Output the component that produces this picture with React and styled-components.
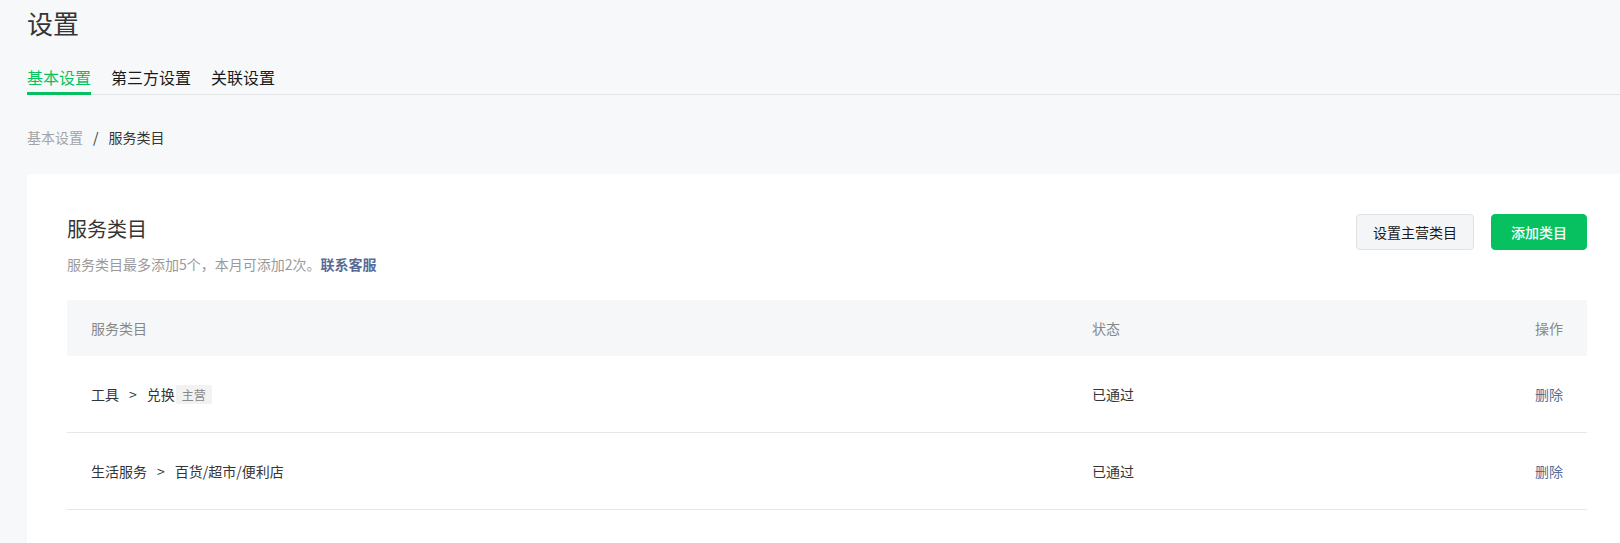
import React from "react";
import styled, { createGlobalStyle } from "styled-components";

const GlobalStyle = createGlobalStyle`
  html, body {
    margin: 0;
    padding: 0;
    overflow: hidden;
    background: #f7f8fa;
  }
  body {
    font-family: "Noto Sans CJK SC", "Noto Sans", sans-serif;
    color: #353535;
  }
`;

const Page = styled.div`
  display: flex;
  flex-direction: column;
  height: 100vh;
  box-sizing: border-box;
  padding: 5px 0 0 27px;
`;

const PageTitle = styled.h1`
  margin: 0;
  font-size: 26px;
  font-weight: normal;
  line-height: 36px;
  color: #353535;
`;

const TabBar = styled.div`
  display: flex;
  gap: 20px;
  margin-top: 24px;
  border-bottom: 1px solid #e3e4e6;
`;

const Tab = styled.div`
  font-size: 16px;
  line-height: 24px;
  padding-bottom: 3px;
  margin-bottom: -1px;
  border-bottom: 3px solid ${(p) => (p.$active ? "#07c160" : "transparent")};
  color: ${(p) => (p.$active ? "#07c160" : "#1a1a1a")};
`;

const Breadcrumb = styled.div`
  display: flex;
  align-items: center;
  margin-top: 32px;
  font-size: 14px;
  line-height: 20px;
`;

const Crumb = styled.span`
  color: ${(p) => (p.$current ? "#353535" : "#a3a3a3")};
`;

const Slash = styled.span`
  margin: 0 10px;
  color: #353535;
`;

const Card = styled.div`
  flex: 1;
  margin-top: 27px;
  background: #fff;
  border-radius: 4px 0 0 0;
  padding: 41px 33px 0 40px;
  overflow: hidden;
`;

const CardHead = styled.div`
  display: flex;
  justify-content: space-between;
  align-items: flex-start;
`;

const CardTitle = styled.h2`
  margin: 0;
  font-size: 20px;
  font-weight: normal;
  line-height: 28px;
  color: #353535;
`;

const CardDesc = styled.p`
  margin: 11px 0 0;
  font-size: 14px;
  line-height: 20px;
  color: #9a9a9a;
`;

const Link = styled.a`
  color: #576b95;
  text-decoration: none;
  font-weight: ${(p) => (p.$bold ? 600 : "normal")};
  cursor: pointer;
`;

const Actions = styled.div`
  display: flex;
  gap: 17px;
  margin-top: -1px;
`;

const Button = styled.button`
  height: 36px;
  min-width: 96px;
  box-sizing: border-box;
  padding: 0 16px;
  border-radius: 4px;
  font-family: inherit;
  font-size: 14px;
  cursor: pointer;
  border: 1px solid ${(p) => (p.$primary ? "#07c160" : "#e0e1e4")};
  background: ${(p) => (p.$primary ? "#07c160" : "#f4f5f7")};
  color: ${(p) => (p.$primary ? "#fff" : "#1a1a1a")};
  font-weight: ${(p) => (p.$primary ? 500 : "normal")};
`;

const Table = styled.div`
  margin-top: 26px;
`;

const Row = styled.div`
  display: grid;
  grid-template-columns: 1001px 1fr 180px;
  align-items: center;
  height: ${(p) => (p.$head ? "56px" : "77px")};
  box-sizing: border-box;
  background: ${(p) => (p.$head ? "#f6f7f9" : "#fff")};
  border-bottom: ${(p) => (p.$head ? "none" : "1px solid #e7e7e7")};
  font-size: 14px;
  line-height: 20px;
  color: ${(p) => (p.$head ? "#888" : "#353535")};
`;

const Cell = styled.div`
  padding: 0 24px;
  display: flex;
  align-items: center;
  justify-content: ${(p) => (p.$right ? "flex-end" : "flex-start")};
`;

const Arrow = styled.span`
  margin: 0 10px;
`;

const Tag = styled.span`
  display: inline-block;
  height: 19px;
  line-height: 19px;
  padding: 0 6px;
  margin-left: 1px;
  background: #f2f2f2;
  border-radius: 2px;
  font-size: 12px;
  color: #888;
`;

const rows = [
  { path: ["工具", "兑换"], main: true, status: "已通过" },
  { path: ["生活服务", "百货/超市/便利店"], main: false, status: "已通过" },
];

export default function App() {
  return (
    <>
      <GlobalStyle />
      <Page>
        <PageTitle>设置</PageTitle>
        <TabBar>
          <Tab $active>基本设置</Tab>
          <Tab>第三方设置</Tab>
          <Tab>关联设置</Tab>
        </TabBar>
        <Breadcrumb>
          <Crumb>基本设置</Crumb>
          <Slash>/</Slash>
          <Crumb $current>服务类目</Crumb>
        </Breadcrumb>
        <Card>
          <CardHead>
            <div>
              <CardTitle>服务类目</CardTitle>
              <CardDesc>
                服务类目最多添加5个，本月可添加2次。
                <Link $bold>联系客服</Link>
              </CardDesc>
            </div>
            <Actions>
              <Button>设置主营类目</Button>
              <Button $primary>添加类目</Button>
            </Actions>
          </CardHead>
          <Table>
            <Row $head>
              <Cell>服务类目</Cell>
              <Cell>状态</Cell>
              <Cell $right>操作</Cell>
            </Row>
            {rows.map((r) => (
              <Row key={r.path.join("-")}>
                <Cell>
                  {r.path[0]}
                  <Arrow>&gt;</Arrow>
                  {r.path[1]}
                  {r.main && <Tag>主营</Tag>}
                </Cell>
                <Cell>{r.status}</Cell>
                <Cell $right>
                  <Link>删除</Link>
                </Cell>
              </Row>
            ))}
          </Table>
        </Card>
      </Page>
    </>
  );
}
